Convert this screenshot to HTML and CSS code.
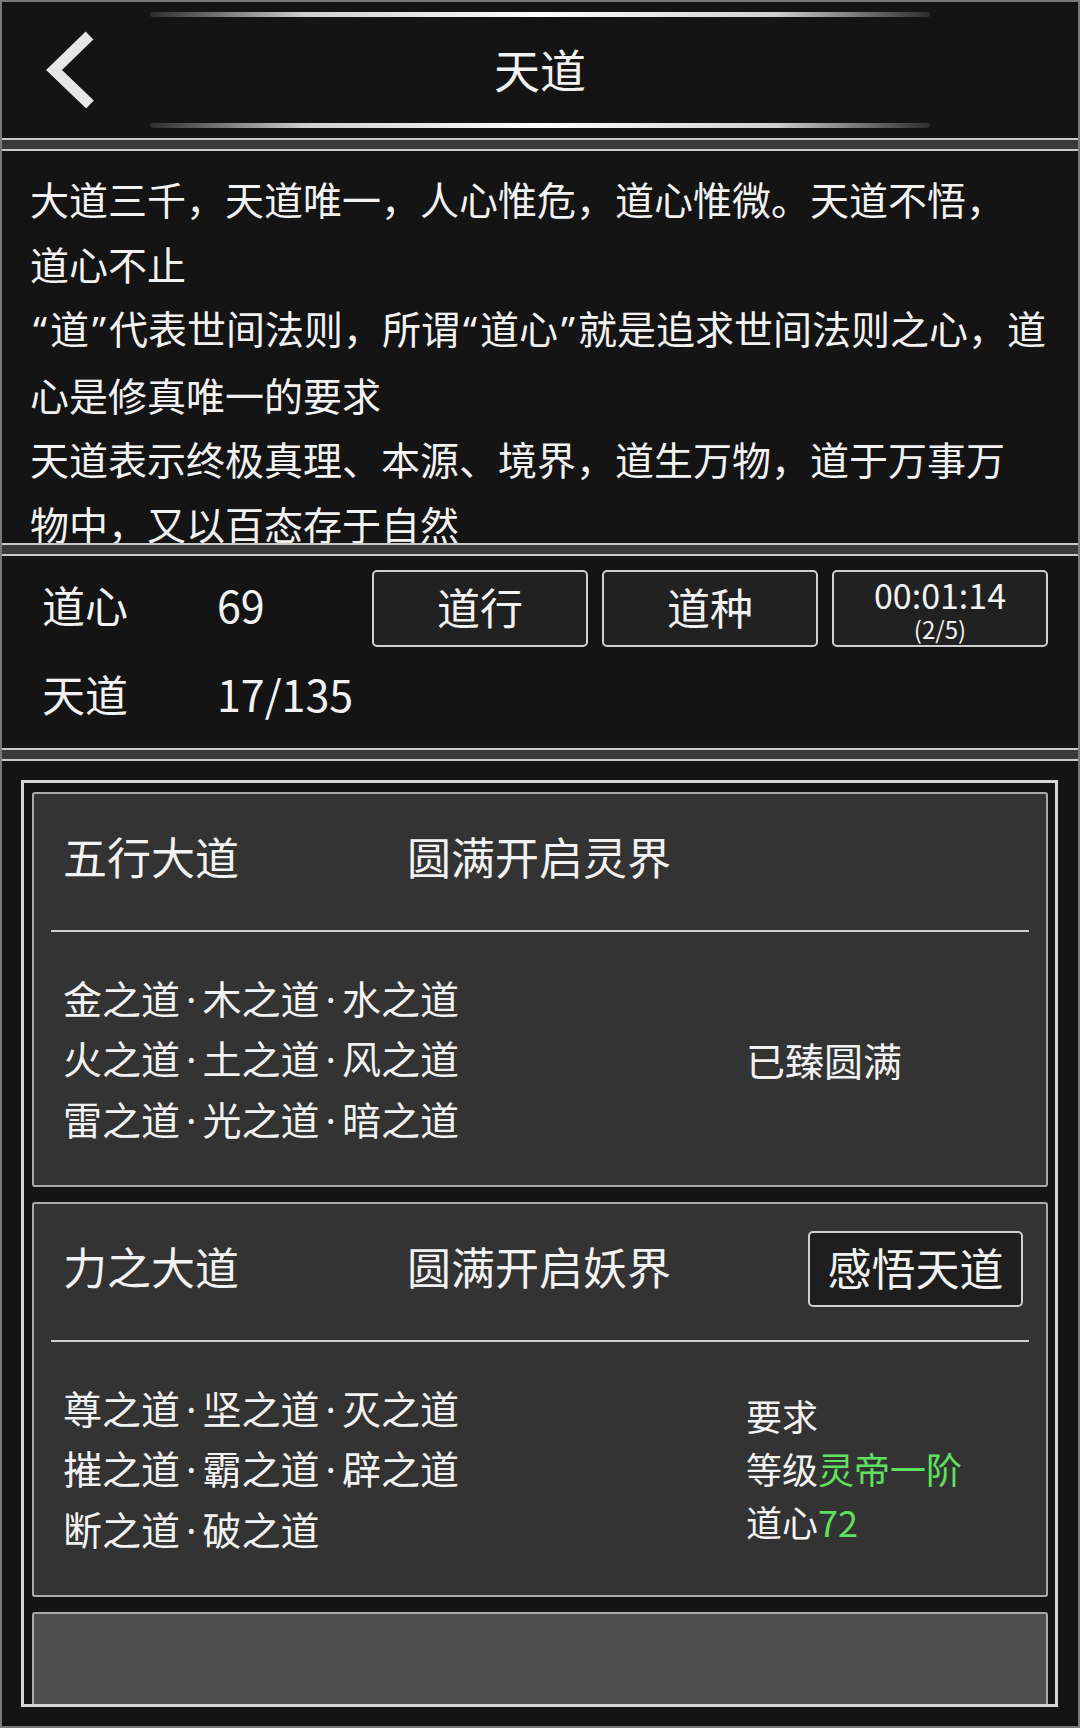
FILE: index.html
```
<!DOCTYPE html>
<html lang="zh-CN">
<head>
    <meta charset="UTF-8">
    <meta name="viewport" content="width=device-width, initial-scale=1.0">
    <title>天道</title>
    <link rel="stylesheet" href="styles.css">
</head>
<body>
    <div class="screen">
        <header class="topbar">
            <div class="glow"></div>
            <div class="topbar-row">
                <a class="back" href="#">
                    <svg width="60" height="80" viewBox="0 0 60 80">
                        <polyline points="49.5,5.5 14,40 50,74.5" fill="none" stroke="#e6e6e6" stroke-width="11" stroke-linejoin="miter"/>
                    </svg>
                </a>
                <h1>天道</h1>
                <span></span>
            </div>
            <div class="glow"></div>
        </header>

        <div class="sep"></div>

        <section class="intro">
            <p>大道三千，天道唯一，人心惟危，道心惟微。天道不悟，<br>道心不止</p>
            <p><span class="q">“</span>道<span class="q">”</span>代表世间法则，所谓<span class="q">“</span>道心<span class="q">”</span>就是追求世间法则之心，道<br>心是修真唯一的要求</p>
            <p>天道表示终极真理、本源、境界，道生万物，道于万事万<br>物中，又以百态存于自然</p>
        </section>

        <div class="sep"></div>

        <section class="stats">
            <span class="stat-label">道心</span>
            <span class="stat-value">69</span>
            <div class="stat-actions">
                <button class="btn">道行</button>
                <button class="btn">道种</button>
                <button class="btn btn-timer">
                    <span class="time">00:01:14</span>
                    <span class="count">(2/5)</span>
                </button>
            </div>
            <span class="stat-label">天道</span>
            <span class="stat-value">17/135</span>
        </section>

        <div class="sep"></div>

        <section class="dao-list">
            <div class="dao-frame">
                <div class="dao-card">
                    <div class="dao-head">
                        <span class="dao-title">五行大道</span>
                        <span class="dao-title">圆满开启灵界</span>
                    </div>
                    <div class="dao-line"></div>
                    <div class="dao-body">
                        <div class="dao-items">
                            <div>金之道<span class="dot">·</span>木之道<span class="dot">·</span>水之道</div>
                            <div>火之道<span class="dot">·</span>土之道<span class="dot">·</span>风之道</div>
                            <div>雷之道<span class="dot">·</span>光之道<span class="dot">·</span>暗之道</div>
                        </div>
                        <div class="dao-state">已臻圆满</div>
                    </div>
                </div>

                <div class="dao-card">
                    <div class="dao-head">
                        <span class="dao-title">力之大道</span>
                        <span class="dao-title">圆满开启妖界</span>
                        <button class="btn dao-btn">感悟天道</button>
                    </div>
                    <div class="dao-line"></div>
                    <div class="dao-body">
                        <div class="dao-items">
                            <div>尊之道<span class="dot">·</span>坚之道<span class="dot">·</span>灭之道</div>
                            <div>摧之道<span class="dot">·</span>霸之道<span class="dot">·</span>辟之道</div>
                            <div>断之道<span class="dot">·</span>破之道</div>
                        </div>
                        <div class="dao-req">
                            <div>要求</div>
                            <div>等级<span class="green">灵帝一阶</span></div>
                            <div>道心<span class="green">72</span></div>
                        </div>
                    </div>
                </div>

                <div class="dao-card empty"></div>
            </div>
        </section>
    </div>
</body>
</html>
```

FILE: styles.css
```
* {
    box-sizing: border-box;
}
body {
    margin: 0;
    background: #141414;
    font-family: "Noto Sans CJK SC", "Noto Sans", sans-serif;
    color: #f2f2f2;
}
.screen {
    width: 1080px;
    height: 1728px;
    border: 2px solid #7a7a7a;
    background: #141414;
    display: flex;
    flex-direction: column;
    overflow: hidden;
}

/* header */
.topbar {
    flex: none;
    height: 136px;
    padding: 10px 0;
    display: flex;
    flex-direction: column;
}
.glow {
    width: 780px;
    height: 5px;
    margin: 0 auto;
    border-radius: 3px;
    background: linear-gradient(to right, rgba(255,255,255,0.1), rgba(255,255,255,0.8) 20%, #fff 50%, rgba(255,255,255,0.8) 80%, rgba(255,255,255,0.1));
}
.topbar-row {
    flex: 1;
    display: grid;
    grid-template-columns: 1fr auto 1fr;
    align-items: center;
}
.back {
    display: block;
    width: 60px;
    height: 80px;
    margin-left: 38px;
}
.back svg {
    display: block;
}
.topbar h1 {
    margin: 0 0 4px;
    font-size: 46px;
    font-weight: normal;
    line-height: 1;
}

.sep {
    flex: none;
    height: 13px;
    border-top: 2px solid #c9c9c9;
    border-bottom: 2px solid #c9c9c9;
    background: #3a3a3a;
}

/* description */
.intro {
    flex: none;
    height: 392px;
    overflow: hidden;
    padding: 15px 0 0 28px;
    font-size: 39px;
    line-height: 64.5px;
    white-space: nowrap;
}
.intro p {
    margin: 0;
}
.intro .q {
    font-family: "Noto Sans", sans-serif;
    padding: 0 3px;
}

/* stats */
.stats {
    flex: none;
    height: 192px;
    display: grid;
    grid-template-columns: 175px 1fr auto;
    grid-template-rows: 77px 77px;
    row-gap: 12px;
    align-items: center;
    padding: 14px 30px 0 40px;
    font-size: 43px;
}
.stat-label,
.stat-value {
    line-height: 1;
    margin-bottom: 8px;
}
.stat-actions {
    display: flex;
    gap: 14px;
}
.btn {
    width: 216px;
    height: 77px;
    padding: 0 0 4px;
    border: 2px solid #cfcfcf;
    border-radius: 5px;
    background: #212121;
    color: #f2f2f2;
    font-family: inherit;
    font-size: 43px;
    line-height: 1;
    display: flex;
    align-items: center;
    justify-content: center;
}
.btn-timer {
    flex-direction: column;
    padding: 3px 0 0;
}
.btn-timer .time {
    font-size: 34px;
    line-height: 34px;
}
.btn-timer .count {
    font-size: 24px;
    line-height: 26px;
    margin-top: 4px;
}

/* dao list */
.dao-list {
    flex: 1;
    min-height: 0;
    padding: 19px 20px 19px 19px;
}
.dao-frame {
    height: 100%;
    border: 3px solid #d6d6d6;
    padding: 9px 7px 0 8px;
    overflow: hidden;
    display: flex;
    flex-direction: column;
    gap: 15px;
}
.dao-card {
    flex: none;
    height: 395px;
    background: #333333;
    border: 2px solid #a9a9a9;
    border-radius: 3px;
    display: flex;
    flex-direction: column;
}
.dao-card.empty {
    background: #4e4e4e;
}
.dao-head {
    height: 136px;
    display: grid;
    grid-template-columns: 344px 1fr auto;
    align-items: center;
    padding: 0 23px 6px 29px;
    font-size: 44px;
}
.dao-title {
    line-height: 1;
    margin-bottom: 6px;
}
.dao-btn {
    width: 215px;
    height: 76px;
    background: #1e1e1e;
    font-size: 44px;
}
.dao-line {
    height: 2px;
    margin: 0 17px;
    background: #d0d0d0;
}
.dao-body {
    flex: 1;
    display: grid;
    grid-template-columns: 683px 1fr;
    align-items: center;
    padding-left: 29px;
    font-size: 39px;
}
.dao-items {
    line-height: 59.5px;
}
.dao-items .dot {
    font-family: "Noto Sans", sans-serif;
    margin: 0 6px;
}
.dao-req {
    font-size: 36px;
    line-height: 53px;
}
.green {
    color: #5fe05f;
}
```
